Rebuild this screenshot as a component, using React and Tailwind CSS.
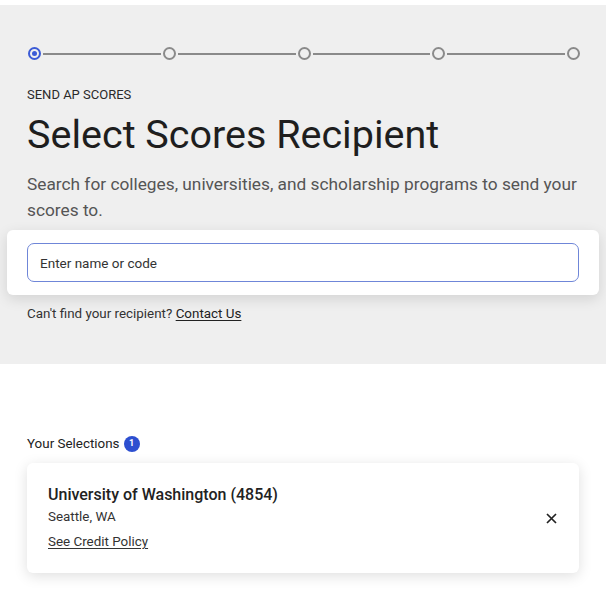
import React from 'react';

const Step = ({ active }) => (
    <span
        className={`flex h-[13px] w-[13px] shrink-0 items-center justify-center rounded-full border-2 ${active ? 'border-[#3b5bd6]' : 'border-[#8a8a8a]'
            }`}
    >
        {active && <span className="h-[5px] w-[5px] rounded-full bg-[#3b5bd6]" />}
    </span>
);

const App = () => {
    const steps = [true, false, false, false, false];

    return (
        <div className="min-h-[590px] bg-white font-['Roboto',sans-serif] text-[#1e1e1e]">
            <div className="h-[5px] bg-white" />

            {/* Top gray area */}
            <div className="h-[359px] bg-[#efefef] pt-[42px]">
                {/* Stepper */}
                <div className="flex items-center pl-[28px] pr-[26px]">
                    {steps.map((active, i) => (
                        <React.Fragment key={i}>
                            {i > 0 && <span className="mx-[2px] h-[2px] flex-1 bg-[#8a8a8a]" />}
                            <Step active={active} />
                        </React.Fragment>
                    ))}
                </div>

                <div className="px-[27px] pt-[27px]">
                    <p className="text-[13px] leading-[16px] text-[#2a2a2a]">SEND AP SCORES</p>
                    <h1 className="mt-[10px] text-[39.5px] leading-[44px] font-normal text-[#1e1e1e]">
                        Select Scores Recipient
                    </h1>
                    <p className="mt-[14px] text-[17.3px] leading-[26px] font-normal text-[#555]">
                        Search for colleges, universities, and scholarship programs to send your scores to.
                    </p>
                </div>

                {/* Search card */}
                <div className="mx-[7px] mt-[7px] rounded-[6px] bg-white px-[20px] py-[13px] shadow-[0_4px_14px_rgba(0,0,0,0.12)]">
                    <input
                        className="h-[39px] w-full rounded-[7px] border border-[#6f86d8] px-[12px] text-[13.5px] text-[#333] outline-none placeholder:text-[#333]"
                        placeholder="Enter name or code"
                    />
                </div>

                <p className="mt-[9px] px-[27px] text-[13.4px] text-[#333]">
                    Can't find your recipient?{' '}
                    <a href="#" className="text-[#222] underline underline-offset-2">
                        Contact Us
                    </a>
                </p>
            </div>

            {/* Selections */}
            <div className="px-[27px] pt-[70px]">
                <div className="flex items-center gap-[4px]">
                    <span className="text-[13.4px] text-[#222]">Your Selections</span>
                    <span className="flex h-[16px] w-[16px] items-center justify-center rounded-full bg-[#2d4fd0] text-[9px] font-bold text-white">
                        1
                    </span>
                </div>

                <div className="mt-[9px] flex items-center justify-between rounded-[6px] bg-white pl-[21px] pr-[22px] py-[22px] shadow-[0_3px_14px_rgba(0,0,0,0.13)]">
                    <div>
                        <p className="text-[16px] leading-[20px] font-medium text-[#222]">University of Washington (4854)</p>
                        <p className="mt-[3px] text-[13.4px] leading-[18px] text-[#333]">Seattle, WA</p>
                        <a href="#" className="mt-[7px] block text-[13.4px] leading-[18px] text-[#333] underline underline-offset-2">
                            See Credit Policy
                        </a>
                    </div>
                    <svg width="11" height="11" viewBox="0 0 11 11" className="shrink-0">
                        <path d="M1 1 L10 10 M10 1 L1 10" stroke="#222" strokeWidth="1.7" />
                    </svg>
                </div>
            </div>
        </div>
    );
};

export default App;
